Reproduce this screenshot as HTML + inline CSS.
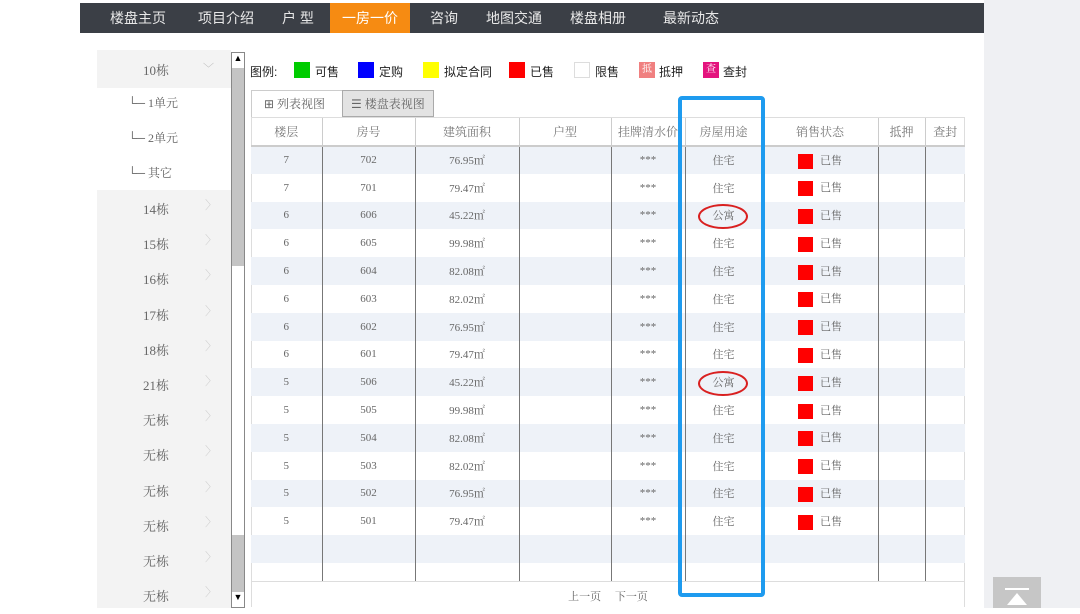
<!DOCTYPE html>
<html><head><meta charset="utf-8"><style>
*{margin:0;padding:0;box-sizing:border-box}
body{width:1080px;height:608px;position:relative;overflow:hidden;background:#fff;font-family:"Liberation Serif","Noto Serif CJK SC",serif;color:#555}
.abs{position:absolute}
.nav{left:80px;top:3px;width:904px;height:30px;background:#3b3f46}
.nav span{position:absolute;top:0;height:30px;line-height:30px;color:#e8e8e8;font-family:"Liberation Sans","Noto Sans CJK SC",sans-serif;font-size:14px;text-align:center}
.side{left:97px;top:50px;width:134px;height:558px;background:#f3f3f3}
.si{position:absolute;left:0;width:134px;font-size:13px;color:#666}
.leg{font-family:"Liberation Sans","Noto Sans CJK SC",sans-serif;font-size:12px;color:#222}
.sw{position:absolute;top:62px;width:16px;height:16px}
table{position:absolute;left:251px;top:118px;border-collapse:collapse;font-size:11px;color:#666}
td{height:27.8px;text-align:center;border-left:1px solid #777;padding:0}
td:first-child{border-left:none}
tr.h td{height:28px;border-left:1px solid #ccc;border-bottom:2px solid #ccc;font-size:12px;color:#777}
tr.h td:first-child{border-left:none}
tr:nth-child(even) td{background:#eef2f8}
.r{display:inline-block;width:15px;height:15px;background:#f00;vertical-align:middle;margin-right:7px}
</style></head><body>
<div class="abs" style="left:984px;top:0;width:96px;height:608px;background:#eff0f3"></div>
<div class="abs nav">
<span style="left:18px;width:80px">楼盘主页</span>
<span style="left:106px;width:80px">项目介绍</span>
<span style="left:188px;width:60px">户 型</span>
<span style="left:250px;width:80px;background:#f68b12;color:#fff">一房一价</span>
<span style="left:334px;width:60px">咨询</span>
<span style="left:394px;width:80px">地图交通</span>
<span style="left:478px;width:80px">楼盘相册</span>
<span style="left:566px;width:90px">最新动态</span>
</div>
<div class="abs side"></div>
<div class="abs" style="left:97px;top:88px;width:134px;height:102px;background:#fff"></div>
<div class="si" style="left:97px;top:60px;padding-left:46px">10栋<span style="position:absolute;left:106px;color:#bbb;font-size:11px">﹀</span></div>
<div class="si" style="left:128px;top:94px;font-size:12px">└─ 1单元</div>
<div class="si" style="left:128px;top:129px;font-size:12px">└─ 2单元</div>
<div class="si" style="left:128px;top:164px;font-size:12px">└─ 其它</div>
<div class="abs" style="left:143px;top:192px;font-size:13px;line-height:35.2px;color:#666">14栋<br>15栋<br>16栋<br>17栋<br>18栋<br>21栋<br>无栋<br>无栋<br>无栋<br>无栋<br>无栋<br>无栋</div>
<div class="abs" style="left:205px;top:188px;font-size:12px;line-height:35.2px;color:#ccc">〉<br>〉<br>〉<br>〉<br>〉<br>〉<br>〉<br>〉<br>〉<br>〉<br>〉<br>〉</div>
<div class="abs" style="left:231px;top:52px;width:14px;height:556px;border:1px solid #888;background:#fff"></div>
<div class="abs" style="left:232px;top:68px;width:12px;height:198px;background:#c4c4c4"></div>
<div class="abs" style="left:232px;top:535px;width:12px;height:57px;background:#c4c4c4"></div>
<div class="abs" style="left:232px;top:53px;width:12px;height:14px;font-size:9px;text-align:center;color:#000">▲</div>
<div class="abs" style="left:232px;top:592px;width:12px;height:14px;font-size:9px;text-align:center;color:#000">▼</div>
<div class="abs leg" style="left:250px;top:63px">图例:</div>
<div class="sw" style="left:294px;background:#0c0"></div><div class="abs leg" style="left:315px;top:63px">可售</div>
<div class="sw" style="left:358px;background:#00f"></div><div class="abs leg" style="left:379px;top:63px">定购</div>
<div class="sw" style="left:423px;background:#ff0"></div><div class="abs leg" style="left:444px;top:63px">拟定合同</div>
<div class="sw" style="left:509px;background:#f00"></div><div class="abs leg" style="left:530px;top:63px">已售</div>
<div class="sw" style="left:574px;border:1px solid #ddd"></div><div class="abs leg" style="left:595px;top:63px">限售</div>
<div class="sw" style="left:639px;background:#f08080;color:#fff;font-size:10px;text-align:center;line-height:16px">抵</div><div class="abs leg" style="left:659px;top:63px">抵押</div>
<div class="sw" style="left:703px;background:#e4147e;color:#fff;font-size:10px;text-align:center;line-height:16px">查</div><div class="abs leg" style="left:723px;top:63px">查封</div>
<div class="abs" style="left:251px;top:90px;width:92px;height:28px;border:1px solid #ccc;border-bottom:none;background:#fff;font-size:12px;line-height:26px;padding-left:12px;color:#666">⊞ 列表视图</div>
<div class="abs" style="left:342px;top:90px;width:92px;height:27px;border:1px solid #aaa;background:#e3e3e3;font-size:12px;line-height:26px;padding-left:8px;color:#666">☰ 楼盘表视图</div>
<div class="abs" style="left:251px;top:117px;width:714px;height:490px;border:1px solid #ddd"></div>
<table>
<tr class="h"><td style="width:71px">楼层</td><td style="width:93px">房号</td><td style="width:104px">建筑面积</td><td style="width:92px">户型</td><td style="width:74px">挂牌清水价</td><td style="width:77px">房屋用途</td><td style="width:116px">销售状态</td><td style="width:47px">抵押</td><td style="width:40px">查封</td></tr>
<tr><td>7</td><td>702</td><td>76.95㎡</td><td></td><td>***</td><td>住宅</td><td><span class="r"></span>已售</td><td></td><td></td></tr>
<tr><td>7</td><td>701</td><td>79.47㎡</td><td></td><td>***</td><td>住宅</td><td><span class="r"></span>已售</td><td></td><td></td></tr>
<tr><td>6</td><td>606</td><td>45.22㎡</td><td></td><td>***</td><td>公寓</td><td><span class="r"></span>已售</td><td></td><td></td></tr>
<tr><td>6</td><td>605</td><td>99.98㎡</td><td></td><td>***</td><td>住宅</td><td><span class="r"></span>已售</td><td></td><td></td></tr>
<tr><td>6</td><td>604</td><td>82.08㎡</td><td></td><td>***</td><td>住宅</td><td><span class="r"></span>已售</td><td></td><td></td></tr>
<tr><td>6</td><td>603</td><td>82.02㎡</td><td></td><td>***</td><td>住宅</td><td><span class="r"></span>已售</td><td></td><td></td></tr>
<tr><td>6</td><td>602</td><td>76.95㎡</td><td></td><td>***</td><td>住宅</td><td><span class="r"></span>已售</td><td></td><td></td></tr>
<tr><td>6</td><td>601</td><td>79.47㎡</td><td></td><td>***</td><td>住宅</td><td><span class="r"></span>已售</td><td></td><td></td></tr>
<tr><td>5</td><td>506</td><td>45.22㎡</td><td></td><td>***</td><td>公寓</td><td><span class="r"></span>已售</td><td></td><td></td></tr>
<tr><td>5</td><td>505</td><td>99.98㎡</td><td></td><td>***</td><td>住宅</td><td><span class="r"></span>已售</td><td></td><td></td></tr>
<tr><td>5</td><td>504</td><td>82.08㎡</td><td></td><td>***</td><td>住宅</td><td><span class="r"></span>已售</td><td></td><td></td></tr>
<tr><td>5</td><td>503</td><td>82.02㎡</td><td></td><td>***</td><td>住宅</td><td><span class="r"></span>已售</td><td></td><td></td></tr>
<tr><td>5</td><td>502</td><td>76.95㎡</td><td></td><td>***</td><td>住宅</td><td><span class="r"></span>已售</td><td></td><td></td></tr>
<tr><td>5</td><td>501</td><td>79.47㎡</td><td></td><td>***</td><td>住宅</td><td><span class="r"></span>已售</td><td></td><td></td></tr>
<tr><td></td><td></td><td></td><td></td><td></td><td></td><td></td><td></td><td></td></tr>
<tr><td></td><td></td><td></td><td></td><td></td><td></td><td></td><td></td><td></td></tr>
</table>
<div class="abs" style="left:252px;top:581px;width:712px;border-top:1px solid #ddd;height:26px;text-align:center;font-size:11px;line-height:30px;color:#666;background:#fff">上一页&nbsp;&nbsp;&nbsp;&nbsp;&nbsp;下一页</div>
<div class="abs" style="left:698px;top:204px;width:50px;height:25px;border:2px solid #d92020;border-radius:50%"></div>
<div class="abs" style="left:698px;top:371px;width:50px;height:25px;border:2px solid #d92020;border-radius:50%"></div>
<div class="abs" style="left:678px;top:96px;width:87px;height:501px;border:4px solid #1e9bef;border-radius:4px"></div>
<div class="abs" style="left:993px;top:577px;width:48px;height:31px;background:#c6c6c6"></div>
<div class="abs" style="left:1005px;top:588px;width:24px;height:2px;background:#fff"></div>
<div class="abs" style="left:1007px;top:593px;width:0;height:0;border-left:10px solid transparent;border-right:10px solid transparent;border-bottom:12px solid #fff"></div>
</body></html>
